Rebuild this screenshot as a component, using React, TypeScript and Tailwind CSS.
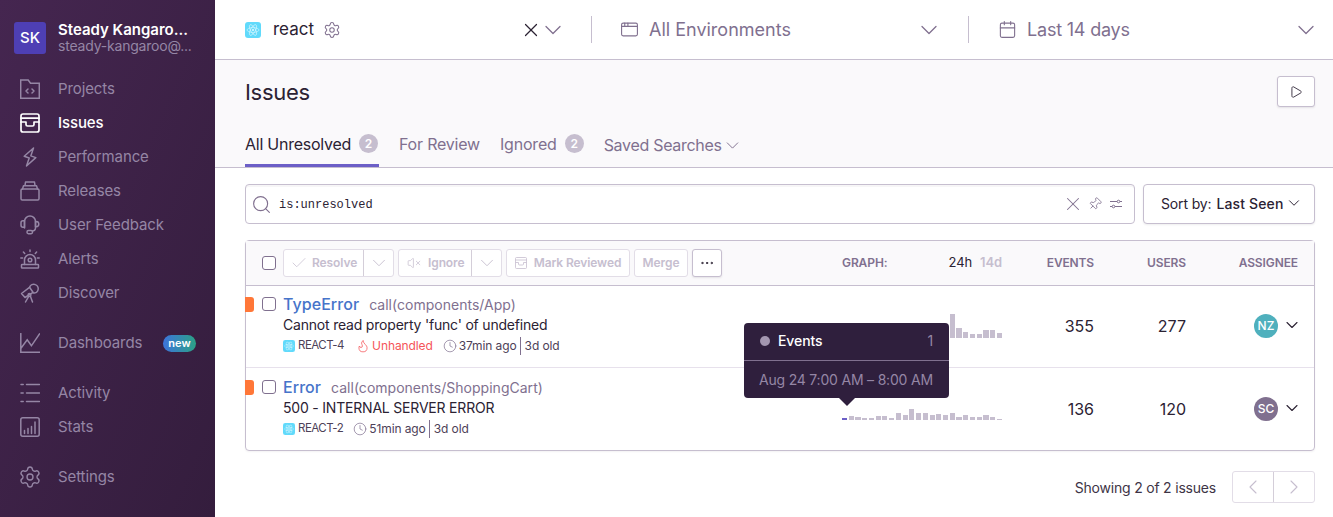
import { ReactNode } from 'react';
import {
  AppWindow,
  Calendar,
  Check,
  ChevronDown,
  ChevronLeft,
  ChevronRight,
  Clock,
  Ellipsis,
  Flame,
  Pin,
  Play,
  Search,
  Settings,
  VolumeX,
  X,
} from 'lucide-react';

function NavSvg({ children, active }: { children: ReactNode; active?: boolean }) {
  return (
    <svg
      viewBox="0 0 20 20"
      fill="none"
      stroke={active ? '#ffffff' : '#9586a5'}
      strokeWidth={active ? 1.7 : 1.5}
      strokeLinecap="round"
      strokeLinejoin="round"
      className="h-5 w-5 shrink-0"
    >
      {children}
    </svg>
  );
}

const navIcons: Record<string, ReactNode> = {
  Projects: (
    <>
      <path d="M.7 1h7.5l2.3 3.3h8.8v15H.7z" strokeLinejoin="miter" />
      <path d="M8 10l-2 2 2 2M12 10l2 2-2 2" />
    </>
  ),
  Issues: (
    <>
      <rect x="1" y="1" width="18" height="18" rx="2" />
      <path d="M1 5.200h18M1 9h5v2.500c0 .8.6 1.500 1.500 1.500h5c.9 0 1.500-.7 1.500-1.500V9h5" />
    </>
  ),
  Performance: <path d="M13.500 1L4.200 9.200l5 1.800L6.500 19l9.300-8.400-5-1.700z" />,
  Releases: (
    <>
      <rect x="1" y="8" width="18" height="11" rx="1.200" />
      <path d="M2.500 8l1-3.300h13l1 3.300M5 4.700L5.500 1h9l.5 3.700" />
    </>
  ),
  'User Feedback': (
    <>
      <path d="M4.500 13V6.500a5.500 5.500 0 0 1 11 0V13a3 3 0 0 1-3 3" />
      <path d="M4.500 5.800H3a2 2 0 0 0-2 2v2.400a2 2 0 0 0 2 2h1.500zM15.500 6.500h.7a2.600 2.600 0 0 1 0 5.200h-.7z" />
      <rect x="7" y="15.500" width="5.500" height="3.200" rx="1.400" />
    </>
  ),
  Alerts: (
    <>
      <rect x="1.500" y="15.500" width="17" height="3.500" rx=".6" />
      <path d="M4.500 15.500V11a5.500 5.500 0 0 1 11 0v4.500" />
      <circle cx="10" cy="11" r="1.800" />
      <path d="M10 1v1.600M3.400 3l1.300 1.400M16.600 3l-1.300 1.400M.8 9h1.800M17.400 9h1.800" />
    </>
  ),
  Discover: (
    <>
      <path d="M1.500 10.500l8-6.200 3.500 5-8 5.200z" />
      <path d="M9.600 4.200c.7-2.300 3.400-3.600 5.800-2.600 2.600 1 3.600 4 2.300 6.200-1 1.800-3 2.600-4.700 2" />
      <circle cx="9.500" cy="12" r="1.400" />
      <path d="M8.700 13.300L5.500 19M10.400 13.200L12.500 19" />
    </>
  ),
  Dashboards: <path d="M.8.5v18.700h19M.8 15.500l6.400-8.700 4.200 6L19.500.8" strokeLinejoin="miter" />,
  Activity: <path d="M1 1.500h2.200M6.500 1.500h13M1 10h2.200M6.500 10h13M1 18.500h2.200M6.500 18.500h13" />,
  Stats: (
    <>
      <rect x=".8" y=".8" width="18.400" height="18.400" rx="2" />
      <path d="M4.500 16.500v-3M8 16.500v-5M11.500 16.500v-7M15 16.500V5" />
    </>
  ),
};

function NavItem({ label, active, badge }: { label: string; active?: boolean; badge?: boolean }) {
  return (
    <div className="flex h-[34px] items-center pl-5 pr-[19px]">
      {label === 'Settings' ? (
        <Settings size={24} strokeWidth={1.35} color="#9586a5" className="-mx-[2px] shrink-0" />
      ) : (
        <NavSvg active={active}>{navIcons[label]}</NavSvg>
      )}
      <span className={`ml-[18px] text-[15px] tracking-[-0.1px] ${active ? 'font-medium text-white' : 'text-[#9586a5]'}`}>{label}</span>
      {badge && (
        <span className="ml-auto flex h-[17px] w-[33px] items-center justify-center rounded-full bg-[linear-gradient(90deg,#3d74db,#2ba185)] text-[11px] font-semibold text-white">
          new
        </span>
      )}
    </div>
  );
}

function Sidebar() {
  return (
    <aside className="flex h-full w-[215px] shrink-0 flex-col bg-[linear-gradient(294deg,#341d3d_0%,#452650_100%)]">
      <div className="flex h-[72px] items-start pl-[14px] pt-[22px]">
        <div className="flex h-8 w-8 items-center justify-center rounded-[3px] bg-[#4e3fb4] text-[15px] font-medium text-white">SK</div>
        <div className="ml-3 -mt-px whitespace-nowrap">
          <div className="text-[15px] leading-[17px] font-semibold text-white">Steady Kangaro...</div>
          <div className="text-[14px] leading-[16px] tracking-[-0.2px] text-[#9586a5]">steady-kangaroo@...</div>
        </div>
      </div>
      <NavItem label="Projects" />
      <NavItem label="Issues" active />
      <NavItem label="Performance" />
      <NavItem label="Releases" />
      <NavItem label="User Feedback" />
      <NavItem label="Alerts" />
      <NavItem label="Discover" />
      <div className="mt-4">
        <NavItem label="Dashboards" badge />
      </div>
      <div className="mt-4">
        <NavItem label="Activity" />
        <NavItem label="Stats" />
      </div>
      <div className="mt-4">
        <NavItem label="Settings" />
      </div>
    </aside>
  );
}

function ReactLogo({ size }: { size: number }) {
  return (
    <svg viewBox="0 0 16 16" width={size} height={size} className="shrink-0">
      <rect width="16" height="16" rx="3" fill="#61dafb" />
      <g fill="none" stroke="#ffffff" strokeOpacity=".75" strokeWidth=".6">
        <ellipse cx="8" cy="8" rx="6" ry="2.400" />
        <ellipse cx="8" cy="8" rx="6" ry="2.400" transform="rotate(60 8 8)" />
        <ellipse cx="8" cy="8" rx="6" ry="2.400" transform="rotate(120 8 8)" />
      </g>
      <circle cx="8" cy="8" r="1.100" fill="#ffffff" fillOpacity=".8" />
    </svg>
  );
}

function TopBar() {
  return (
    <header className="flex h-[60px] shrink-0 items-center border-b border-[#c6becf] bg-white shadow-[0_1px_2px_rgba(43,34,51,0.06)]">
      <div className="flex h-[27px] w-[377px] items-center border-r border-[#c6becf] pl-[30px] pr-[24px]">
        <ReactLogo size={16} />
        <span className="ml-3 text-[17px] text-[#2b2233]">react</span>
        <Settings size={18} strokeWidth={1.4} color="#80708f" className="ml-[9px]" />
        <X size={22} strokeWidth={1.3} color="#2b2233" className="ml-auto" />
        <ChevronDown size={28} strokeWidth={1.1} color="#80708f" className="-ml-[3px]" />
      </div>
      <div className="flex h-[27px] w-[377px] items-center border-r border-[#c6becf] pl-[28px] pr-[25px]">
        <AppWindow size={19} strokeWidth={1.4} color="#80708f" />
        <span className="ml-[10px] text-[18px] text-[#80708f]">All Environments</span>
        <ChevronDown size={28} strokeWidth={1.1} color="#80708f" className="ml-auto" />
      </div>
      <div className="flex h-[27px] flex-1 items-center pl-[29px] pr-[13px]">
        <Calendar size={19} strokeWidth={1.4} color="#80708f" />
        <span className="ml-[10px] text-[18px] tracking-[-0.2px] text-[#80708f]">Last 14 days</span>
        <ChevronDown size={28} strokeWidth={1.1} color="#80708f" className="ml-auto" />
      </div>
    </header>
  );
}

function CountBadge() {
  return (
    <span className="ml-2 flex h-[19px] w-[19px] items-center justify-center rounded-full bg-[#c6becf] text-[12px] font-semibold text-white">2</span>
  );
}

function PageHeader() {
  return (
    <div className="h-[108px] shrink-0 border-b border-[#c6becf] bg-[#faf9fb] pl-[30px] pr-[18px]">
      <div className="flex h-[47px] items-end justify-between">
        <h1 className="text-[22px] leading-[30px] tracking-[-0.3px] text-[#2b2233]">Issues</h1>
        <button className="flex h-[31px] w-[38px] items-center justify-center rounded-[3px] border border-[#c6becf] bg-white shadow-[0_1px_2px_rgba(43,34,51,0.1)]">
          <Play size={14} strokeWidth={1.5} color="#2b2233" />
        </button>
      </div>
      <div className="mt-[20px] flex h-[41px] items-start">
        <div className="flex h-[40px] w-[134px] items-start border-b-[3px] border-[#6c5fc7] pt-[7px] text-[#2b2233]">
          <span className="text-[16px] leading-[20px] tracking-[-0.25px]">All Unresolved</span>
          <CountBadge />
        </div>
        <div className="ml-5 pt-[7px] text-[16px] leading-[20px] tracking-[-0.2px] text-[#80708f]">For Review</div>
        <div className="ml-5 flex pt-[7px] text-[16px] leading-[20px] tracking-[-0.2px] text-[#80708f]">
          Ignored
          <CountBadge />
        </div>
        <div className="ml-5 flex items-center pt-[8px] text-[16px] leading-[20px] tracking-[-0.3px] text-[#80708f]">
          Saved Searches
          <ChevronDown size={21} strokeWidth={1.1} color="#80708f" className="-my-1" />
        </div>
      </div>
    </div>
  );
}

function SearchRow() {
  return (
    <div className="flex gap-2">
      <div className="flex h-10 flex-1 items-center rounded-[4px] border border-[#c6becf] bg-white pl-[5px] pr-[11px] shadow-[inset_0_2px_0_rgba(43,34,51,0.04)]">
        <Search size={21} strokeWidth={1.3} color="#80708f" />
        <span className="ml-[7px] mt-[2px] font-['Liberation_Mono',monospace] text-[12px] text-[#2b2233]">is:unresolved</span>
        <X size={22} strokeWidth={1.1} color="#80708f" className="ml-auto" />
        <Pin size={14} strokeWidth={1.4} color="#80708f" className="ml-[4px] rotate-45" />
        <svg viewBox="0 0 14 14" fill="none" stroke="#80708f" strokeWidth="1" className="ml-[7px] h-[14px] w-[14px]">
          <path d="M1 4.500h7M11 4.500h2M1 9.500h2M6 9.500h7" />
          <circle cx="9.500" cy="4.500" r="1.300" />
          <circle cx="4.500" cy="9.500" r="1.300" />
        </svg>
      </div>
      <div className="flex h-10 w-[172px] items-center rounded-[4px] border border-[#c6becf] bg-white pb-[2px] pl-[17px] text-[14px] tracking-[-0.15px] text-[#2b2233] shadow-[0_1px_2px_rgba(43,34,51,0.08)]">
        Sort by:
        <span className="ml-[5px] font-medium tracking-[0.15px]">Last Seen</span>
        <ChevronDown size={18} strokeWidth={1.3} color="#2b2233" className="ml-[1px]" />
      </div>
    </div>
  );
}

function Checkbox() {
  return <span className="block h-[14px] w-[14px] shrink-0 rounded-[3px] border border-[#80708f] bg-white" />;
}

const disabledBtn =
  'flex h-[28px] items-center justify-center rounded-[3px] border border-[#e2dde7] bg-white text-[12px] font-semibold tracking-[-0.1px] text-[#c6becf]';

function Toolbar() {
  return (
    <div className="flex h-[45px] items-center border-b border-[#c6becf] bg-[#faf9fb] pl-4 pr-4 text-[#80708f]">
      <Checkbox />
      <div className={`${disabledBtn} ml-[7px] w-[111px]`}>
        <Check size={18} strokeWidth={1} className="ml-[6px] shrink-0" />
        <span className="ml-[4px] w-[50px]">Resolve</span>
        <span className="ml-auto flex h-full w-[30px] items-center justify-center border-l border-[#d4ced9]">
          <ChevronDown size={22} strokeWidth={1} />
        </span>
      </div>
      <div className={`${disabledBtn} ml-1 w-[104px]`}>
        <VolumeX size={14} strokeWidth={1.3} className="ml-[8px] shrink-0" />
        <span className="ml-[7px]">Ignore</span>
        <span className="ml-auto flex h-full w-[30px] items-center justify-center border-l border-[#d4ced9]">
          <ChevronDown size={22} strokeWidth={1} />
        </span>
      </div>
      <div className={`${disabledBtn} ml-1 w-[124px]`}>
        <svg viewBox="0 0 12 12" fill="none" stroke="currentColor" strokeWidth=".8" className="mr-[7px] h-3 w-3">
          <rect x=".5" y=".5" width="11" height="11" rx="1" />
          <path d="M.5 3h11M.5 5.500h3v1.500a1 1 0 0 0 1 1h3a1 1 0 0 0 1-1V5.500h3" />
        </svg>
        Mark Reviewed
      </div>
      <div className={`${disabledBtn} ml-1 w-[54px]`}>Merge</div>
      <button className="ml-1 flex h-[28px] w-[30px] items-center justify-center rounded-[3px] border border-[#c6becf] bg-white shadow-[0_1px_2px_rgba(43,34,51,0.1)]">
        <Ellipsis size={16} strokeWidth={1.5} color="#2b2233" />
      </button>
      <div className="ml-auto flex w-[160px] items-center text-[12px] font-semibold tracking-[-0.1px]">
        <span>GRAPH:</span>
        <span className="ml-auto text-[13px] font-normal text-[#2b2233]">24h</span>
        <span className="ml-2 text-[13px] font-semibold text-[#c6becf]">14d</span>
      </div>
      <div className="w-[92px] text-right text-[12px] font-semibold tracking-[-0.15px]">EVENTS</div>
      <div className="w-[92px] text-right text-[12px] font-semibold tracking-[-0.1px]">USERS</div>
      <div className="w-[112px] text-right text-[12px] font-semibold tracking-[-0.1px]">ASSIGNEE</div>
    </div>
  );
}

type Issue = {
  type: string;
  location: string;
  message: string;
  shortId: string;
  unhandled?: boolean;
  age: string;
  events: string;
  users: string;
  initials: string;
  avatar: string;
  bars: number[];
};

const issues: Issue[] = [
  {
    type: 'TypeError',
    location: 'call(components/App)',
    message: "Cannot read property 'func' of undefined",
    shortId: 'REACT-4',
    unhandled: true,
    age: '37min ago',
    events: '355',
    users: '277',
    initials: 'NZ',
    avatar: 'bg-[#4fb0bd]',
    bars: [0, 0, 0, 0, 0, 0, 0, 0, 0, 0, 0, 0, 0, 0, 0, 0, 24, 10, 6, 4, 4, 8, 8, 5],
  },
  {
    type: 'Error',
    location: 'call(components/ShoppingCart)',
    message: '500 - INTERNAL SERVER ERROR',
    shortId: 'REACT-2',
    age: '51min ago',
    events: '136',
    users: '120',
    initials: 'SC',
    avatar: 'bg-[#80708f]',
    bars: [2, 4, 3, 2, 2, 4, 4, 2, 7, 5, 11, 7, 7, 5, 6, 5, 7, 3, 5, 3, 3, 5, 3, 1],
  },
];

function Row({ issue, last }: { issue: Issue; last?: boolean }) {
  return (
    <div className={`relative flex h-[82px] pr-4 ${last ? 'pt-px' : 'border-b border-[#e7e1ec]'}`}>
      <span className={`absolute -left-px h-[15px] w-[9px] rounded-r-[3px] bg-[#ff7738] ${last ? 'top-[12px]' : 'top-[11px]'}`} />
      <div className="pl-4 pt-[11px]">
        <Checkbox />
      </div>
      <div className="ml-[7px] pt-[6px]">
        <div className="flex h-[20px] items-baseline">
          <span className="text-[16px] font-medium tracking-[0.05px] text-[#4674ca]">{issue.type}</span>
          <span className="ml-[10px] text-[14px] tracking-[0.02px] text-[#80708f]">{issue.location}</span>
        </div>
        <div className="mt-[3px] text-[14px] leading-[20px] tracking-[-0.2px] text-[#2b2233]">{issue.message}</div>
        <div className="mt-[1px] flex h-[20px] items-center text-[12px] tracking-[-0.1px] text-[#4d4158]">
          <ReactLogo size={12} />
          <span className="ml-[3px] text-[11.5px] tracking-[-0.5px]">{issue.shortId}</span>
          {issue.unhandled && (
            <span className="ml-3 flex items-center text-[#f55459]">
              <Flame size={14} strokeWidth={1.3} className="mr-[2px]" />
              Unhandled
            </span>
          )}
          <Clock size={14} strokeWidth={1.2} color="#80708f" className="ml-[10px]" />
          <span className="ml-[2px] border-r border-[#80708f] pr-[3px]">{issue.age}</span>
          <span className="ml-1">3d old</span>
        </div>
      </div>
      <div className={`ml-auto flex h-[80px] w-[160px] items-end gap-[1.67px] ${last ? 'pb-[29px]' : 'pb-[28px]'}`}>
        {issue.bars.map((bar, i) => (
          <span
            key={i}
            className={`flex-1 ${last && i === 0 ? 'bg-[#6c5fc7]' : 'bg-[#c6becf]'}`}
            style={{ height: bar }}
          />
        ))}
      </div>
      <div className="w-[92px] pt-[28px] text-right text-[16px] leading-[24px] text-[#2b2233]">{issue.events}</div>
      <div className="w-[92px] pt-[28px] text-right text-[16px] leading-[24px] text-[#2b2233]">{issue.users}</div>
      <div className="flex w-[112px] items-start justify-end pt-[28px]">
        <span className={`flex h-6 w-6 items-center justify-center rounded-full text-[12px] font-medium text-white ${issue.avatar}`}>{issue.initials}</span>
        <ChevronDown size={20} strokeWidth={1.3} color="#2b2233" className="-mr-1 ml-1 mt-[1px]" />
      </div>
    </div>
  );
}

function Tooltip() {
  return (
    <div className="absolute left-[498px] top-[82px] z-10 w-[205px] rounded-[4px] bg-[#2f1f3d] text-[14px] tracking-[-0.1px]">
      <div className="flex h-[38px] items-center border-b border-[#80708f] pb-[2px] pl-4 pr-4">
        <span className="h-[10px] w-[10px] rounded-full bg-[#a396b0]" />
        <span className="ml-2 font-medium text-white">Events</span>
        <span className="ml-auto text-[#9586a5]">1</span>
      </div>
      <div className="flex h-[37px] items-center pl-[15px] tracking-[-0.2px] text-[#9586a5]">Aug 24 7:00 AM – 8:00 AM</div>
      <span className="absolute left-[95px] top-full h-0 w-0 border-x-[8px] border-t-[8px] border-x-transparent border-t-[#2f1f3d]" />
    </div>
  );
}

export default function App() {
  return (
    <div className="flex h-[517px] w-full overflow-hidden bg-white font-['Inter','Liberation_Sans',sans-serif]">
      <Sidebar />
      <main className="flex min-w-0 flex-1 flex-col">
        <TopBar />
        <PageHeader />
        <div className="pl-[30px] pr-[18px] pt-4">
          <SearchRow />
          <div className="relative mt-4 rounded-[4px] border border-[#c6becf] shadow-[0_1px_2px_rgba(43,34,51,0.06)]">
            <Toolbar />
            {issues.map((issue, i) => (
              <Row key={issue.type} issue={issue} last={i === issues.length - 1} />
            ))}
            <Tooltip />
          </div>
          <div className="mt-5 flex items-center justify-end">
            <span className="text-[14px] tracking-[-0.2px] text-[#3e3446]">Showing 2 of 2 issues</span>
            <div className="ml-4 flex h-8 w-[83px] rounded-[3px] border border-[#e2dde7] text-[#c6becf]">
              <span className="flex flex-1 items-center justify-center border-r border-[#d4ced9]">
                <ChevronLeft size={24} strokeWidth={1.1} />
              </span>
              <span className="flex flex-1 items-center justify-center">
                <ChevronRight size={24} strokeWidth={1.1} />
              </span>
            </div>
          </div>
        </div>
      </main>
    </div>
  );
}
